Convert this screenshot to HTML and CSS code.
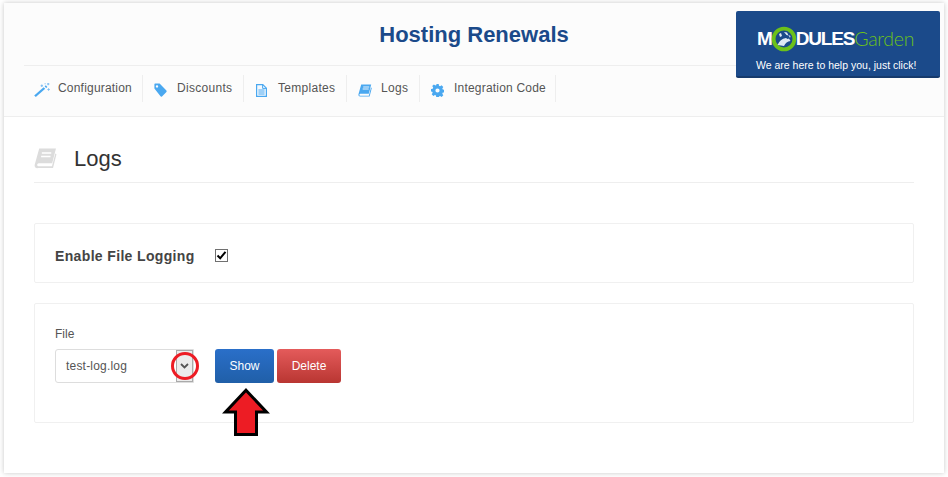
FILE: index.html
```html
<!DOCTYPE html>
<html lang="en">
<head>
<meta charset="utf-8">
<title>Hosting Renewals</title>
<link rel="stylesheet" href="styles.css">
</head>
<body>
<div class="panel">
  <header class="top">
    <h1 class="title">Hosting Renewals</h1>
    <nav class="nav">
      <a class="nav-item"><span class="nav-icon nav-icon-first"><svg width="16" height="14" viewBox="0 0 16 14"><path d="M0.2 12.6 L9.6 4.2 L11.200 5.800 L1.800 14 Z" fill="#4aa8f0"/><path d="M10.600 3.400l1.200-1.100 1.600 1.600-1.200 1.100z" fill="#4aa8f0"/><path d="M6.600 2.200h2.400v1H6.600zM7.300 1.500h1v2.400h-1zM13 .6h2.400v1H13zM13.700 0h1v2.200h-1zM13.400 6h2.400v1h-2.400zM14.100 5.300h1v2.400h-1zM10.600 .2h1v1h-1z" fill="#7dbdf3"/></svg></span>Configuration</a>
      <a class="nav-item"><span class="nav-icon"><svg width="13" height="14" viewBox="0 0 13 14"><path d="M0.4 1.2 Q0.4 0.4 1.2 0.4 L5.6 0.4 L12.400 7.600 Q13 8.400 12.400 9 L8 13.400 Q7.200 14 6.500 13.300 L0.400 5.600 Z M3 2.200 A1.200 1.200 0 1 0 3 4.600 A1.200 1.200 0 1 0 3 2.200 Z" fill="#4aa8f0" fill-rule="evenodd"/></svg></span>Discounts</a>
      <a class="nav-item"><span class="nav-icon nav-icon-doc"><svg width="11" height="13" viewBox="0 0 11 13"><path d="M.6.6h6.200l3.600 3.600v8.200H.6z" fill="#f4f9fe" stroke="#4aa8f0" stroke-width="1.200"/><path d="M6.600.8v3.600h3.600" fill="none" stroke="#4aa8f0"/><path d="M2.400 6h6.200M2.400 8h6.200M2.400 10h6.200" stroke="#4aa8f0"/></svg></span>Templates</a>
      <a class="nav-item"><span class="nav-icon"><svg width="14" height="13" viewBox="0 0 14 13"><path d="M3.200.4h10l-2.400 9.400H2.400Q1.600 9.800 1.300 11 Q1.400 11.800 2.200 11.800h8.600l2.200-8.200.8.500-2.200 8.500H2 Q.2 12.600.4 10.600Z" fill="#4aa8f0"/><path d="M5.200 3h6M4.700 5h6" stroke="#fcfcfc" stroke-width=".9"/></svg></span>Logs</a>
      <a class="nav-item nav-item-long"><span class="nav-icon"><svg width="13" height="13" viewBox="0 0 13 13"><path d="M5.300 0h2.400l.3 1.800 1.100.5 1.500-1 1.700 1.700-1 1.500.5 1.100 1.700.3v2.400l-1.700.3-.5 1.100 1 1.500-1.700 1.700-1.500-1-1.100.5-.3 1.600H5.300L5 11.500l-1.100-.5-1.500 1L.7 10.300l1-1.500-.5-1.100L0 7.400V5l1.700-.3.5-1.100-1-1.500L2.900.4l1.500 1 1.100-.5zM6.500 4.400a2.100 2.100 0 1 0 0 4.200 2.100 2.100 0 0 0 0-4.200z" fill="#4aa8f0" fill-rule="evenodd"/></svg></span>Integration Code</a>
    </nav>
  </header>

  <a class="promo">
    <span class="promo-logo">
      <span class="logo-bold">M</span>
      <svg class="logo-globe" width="26" height="26" viewBox="0 0 26 26"><circle cx="13" cy="13" r="10.400" fill="#1b4a8a" stroke="#6cc11a" stroke-width="3.800"/><path d="M6.500 19 Q9 13 15 12 L16.500 13 L18 12.500 L19.500 15 Q15 15.500 13 20 L10 19.500 Z M13 6l3 .5 1.500 3-2-.5zM17.500 9l2 1-.5 2zM8 8l2-1 1 3-2 1z" fill="#dfe8f3"/></svg>
      <span class="logo-bold logo-tight">DULES</span><span class="logo-light">Garden</span>
    </span>
    <span class="promo-tag">We are here to help you, just click!</span>
  </a>

  <main class="content">
    <div class="page-head">
      <span class="page-icon"><svg width="23" height="21" viewBox="0 0 22 20"><path d="M5 .5h16l-3.600 14H4.500Q3.200 14.500 3 16 Q3 17.500 4.500 17.500h12.700l3.200-12.400 1.100.8-3.300 13.300H4Q.3 19.700.6 16.300Z" fill="#dcdcdc"/><path d="M7.500 4.800h9M6.800 8h9" stroke="#fff" stroke-width="1.400"/></svg></span>
      <h2 class="page-title">Logs</h2>
    </div>

    <section class="card card-toggle">
      <span class="toggle-label">Enable File Logging</span>
      <span class="check"><svg width="11" height="11" viewBox="0 0 11 11"><path d="M1.500 5.500 L4.200 8.300 L9.500 1.800" fill="none" stroke="#000" stroke-width="2"/></svg></span>
    </section>

    <section class="card card-file">
      <div class="field-label">File</div>
      <div class="file-row">
        <div class="select">
          <span class="select-value">test-log.log</span>
          <span class="select-arrow"><svg width="9" height="6" viewBox="0 0 9 6"><path d="M1 1 L4.500 4.500 L8 1" fill="none" stroke="#555" stroke-width="1.800"/></svg></span>
        </div>
        <button class="btn btn-blue">Show</button>
        <button class="btn btn-red">Delete</button>
        <svg class="mark-circle" width="30" height="30" viewBox="0 0 30 30"><circle cx="15" cy="15" r="12.500" fill="none" stroke="#ed1c24" stroke-width="3"/></svg>
        <svg class="mark-arrow" width="52" height="52" viewBox="0 0 52 52"><path d="M25 3.200 L45.500 25 H35.500 V47.500 H14.500 V25 H4.500 Z" fill="#ed1c24" stroke="#000" stroke-width="3"/></svg>
      </div>
    </section>
  </main>
</div>
</body>
</html>
```
FILE: styles.css
```css
* { box-sizing: border-box; }
html, body { margin: 0; padding: 0; background: #fff; }
body {
  width: 948px;
  height: 477px;
  overflow: hidden;
  padding: 3px 4px 4px;
  font-family: "Liberation Sans", Arial, sans-serif;
  color: #333;
}
.panel {
  position: relative;
  height: 470px;
  background: #fff;
  box-shadow: 0 0 5px rgba(0, 0, 0, .22);
}
.top {
  height: 114px;
  padding: 0 20px;
  background: #fcfcfc;
  border-bottom: 1px solid #eee;
}
.title {
  margin: 0;
  height: 62px;
  padding-top: 19px;
  text-align: center;
  font-size: 22px;
  line-height: 26px;
  font-weight: bold;
  color: #1b4a8a;
}
.nav {
  display: grid;
  grid-template-columns: 119px 101px 103px 73px 136px;
  justify-content: start;
  height: 51px;
  padding-top: 9px;
  border-top: 1px solid #eee;
  align-items: start;
}
.nav-item {
  display: flex;
  align-items: center;
  height: 27px;
  padding: 0 0 2px 10px;
  border-right: 1px solid #eee;
  font-size: 12px;
  letter-spacing: .3px;
  color: #555;
  white-space: nowrap;
}
.nav-item:first-child,
.nav-item-long { letter-spacing: .2px; }
.nav-icon {
  display: flex;
  align-items: center;
  width: 24px;
  height: 27px;
  padding: 3px 0 0 1px;
  margin-bottom: -2px;
  flex: none;
}
.nav-icon-first { padding-left: 0; }
.nav-icon-doc { padding-left: 2px; }
.promo {
  position: absolute;
  left: 732px;
  top: 8px;
  width: 204px;
  height: 67px;
  background: #1b4a8a;
  border-bottom: 2px solid #163a6c;
  border-radius: 2px;
  color: #fff;
}
.promo-logo {
  display: flex;
  align-items: center;
  height: 26px;
  margin: 15px 0 0 21px;
}
.logo-bold {
  font-size: 19px;
  font-weight: bold;
  line-height: 26px;
  letter-spacing: 0;
}
.logo-tight { letter-spacing: -1.200px; }
.logo-globe { margin: 0 -1px 0 -2px; flex: none; }
.logo-light {
  font-family: "Lato", "Liberation Sans", sans-serif;
  font-weight: 300;
  font-size: 19.500px;
  line-height: 26px;
  color: #6cc11a;
  letter-spacing: -.3px;
}
.promo-tag {
  display: block;
  margin: 6px 0 0 20px;
  font-size: 10.500px;
  line-height: 14px;
  letter-spacing: 0;
  white-space: nowrap;
}
.content { padding: 0 30px; }
.page-head {
  display: flex;
  align-items: center;
  height: 66px;
  margin-bottom: 40px;
  padding-top: 16px;
  border-bottom: 1px solid #eee;
}
.page-icon {
  display: flex;
  width: 40px;
  flex: none;
  padding-top: 2px;
}
.page-title {
  margin: 0;
  font-size: 22px;
  line-height: 26px;
  font-weight: normal;
  color: #333;
  padding-top: 2px;
}
.card {
  border: 1px solid #f0f0f0;
  border-radius: 2px;
  padding: 0 20px;
  margin-bottom: 20px;
}
.card-toggle {
  display: flex;
  align-items: center;
  height: 60px;
  padding-top: 4px;
}
.toggle-label {
  width: 160px;
  padding-top: 2px;
  font-size: 14px;
  font-weight: bold;
  letter-spacing: .35px;
  color: #444;
}
.check {
  display: flex;
  align-items: center;
  justify-content: center;
  width: 13px;
  height: 13px;
  border: 1px solid #707070;
  background: #fff;
}
.card-file {
  height: 120px;
  padding-top: 23px;
}
.field-label {
  font-size: 12px;
  line-height: 14px;
  color: #555;
  margin-bottom: 8px;
}
.file-row {
  position: relative;
  display: flex;
  align-items: flex-start;
}
.select {
  display: flex;
  justify-content: space-between;
  align-items: center;
  width: 139px;
  height: 34px;
  margin-right: 21px;
  padding-left: 10px;
  border: 1px solid #ddd;
  border-radius: 3px 0 0 3px;
  background: #fff;
  font-size: 12px;
  letter-spacing: .2px;
  color: #555;
}
.select-arrow {
  display: flex;
  align-items: center;
  justify-content: center;
  width: 17px;
  height: 32px;
  border: 1px solid #aaa;
  background: #ececec;
}
.btn {
  height: 34px;
  padding: 0;
  border: 0;
  border-radius: 3px;
  font-family: inherit;
  font-size: 12px;
  color: #fff;
}
.btn-blue {
  width: 59px;
  margin-right: 3px;
  background: linear-gradient(#2a6fc9, #205fa8);
}
.btn-red {
  width: 64px;
  background: linear-gradient(#e45b5b, #b93632);
}
.mark-circle {
  position: absolute;
  left: 115px;
  top: 2px;
}
.mark-arrow {
  position: absolute;
  left: 166px;
  top: 38px;
}
```
